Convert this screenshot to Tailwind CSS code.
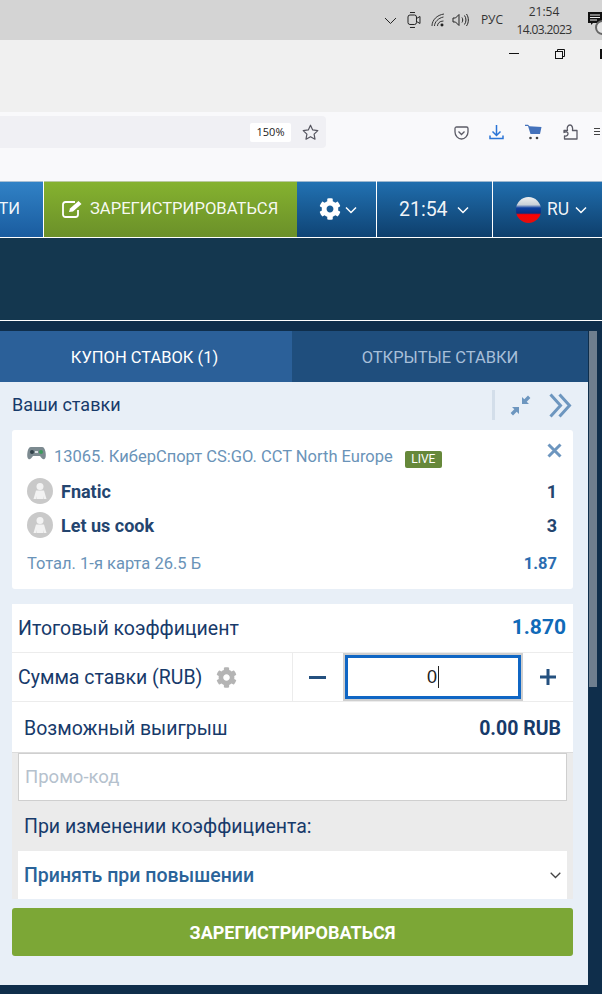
<!DOCTYPE html>
<html lang="ru">
<head>
<meta charset="utf-8">
<script src="https://cdn.jsdelivr.net/npm/@tailwindcss/browser@4"></script>
</head>
<body class="w-[602px] h-[994px] overflow-hidden bg-[#0f2e4b] font-['Roboto',sans-serif]">

<!-- Windows tray -->
<div class="h-[40px] bg-[#d4d4d4] flex items-center relative overflow-hidden text-[#2a2a2a]">
  <svg class="ml-[384px] w-[13px] h-[13px]" viewBox="0 0 13 13" fill="none" stroke="#222" stroke-width="1"><path d="M1 4l5.500 5.500L12 4"/></svg>
  <svg class="ml-[10px] w-[14px] h-[18px]" viewBox="0 0 14 18" fill="none" stroke="#222" stroke-width="1"><rect x="1" y="4" width="8.500" height="9.500" rx="2"/><path d="M9.500 7.500l3.500-2v7l-3.500-2M3 1.500h5M3 16.500h5"/></svg>
  <svg class="ml-[10px] w-[14px] h-[14px]" viewBox="0 0 14 14" fill="none" stroke="#333" stroke-width="1"><path d="M1 13C1 7 6 2 13 1M3.500 13c0-4 4-8 9-9M6.500 13c0-2.500 2-5 6-5"/><circle cx="11" cy="12" r="1.500" fill="#222" stroke="none"/></svg>
  <svg class="ml-[7px] w-[17px] h-[14px]" viewBox="0 0 17 14" fill="none" stroke="#222" stroke-width="1"><path d="M1 5h2.500L7 1.500v11L3.500 9H1zM10 4.500c1 1.500 1 3.500 0 5M12.500 2.500c2 2.500 2 6.500 0 9M14.500 1c2.500 3.500 2.500 8.500 0 12"/></svg>
  <span class="ml-[12px] text-[12px] font-['Open_Sans'] text-[#333] leading-none">РУС</span>
  <div class="ml-[13px] mt-[1px] w-[56px] text-center text-[12px] leading-[18px] font-['Open_Sans'] text-[#333] flex flex-col">
    <span>21:54</span><span class="tracking-[-0.6px] whitespace-nowrap">14.03.2023</span>
  </div>
  <svg class="ml-[16px] w-[14px] h-[14px] mb-[2px] shrink-0" viewBox="0 0 14 14" fill="#111"><path d="M0 0h14v11H5l-2 2v-2H0z"/><path d="M2 3h10M2 5.500h10M2 8h7" stroke="#eee" stroke-width="1"/></svg>
  <div class="absolute left-[595px] top-[20px] w-[15px] h-[15px] rounded-full bg-[#e4e4e4] border-2 border-[#666]"></div>
</div>

<!-- Window title bar -->
<div class="h-[72px] bg-[#f0f0f0] flex items-start">
  <div class="ml-[509px] mt-[13px] w-[10px] h-px bg-[#111]"></div>
  <svg class="ml-[36px] mt-[9px] w-[10px] h-[10px]" viewBox="0 0 10 10" fill="none" stroke="#111" stroke-width="1"><rect x="0.500" y="2.500" width="7" height="7"/><path d="M2.500 2.500v-2h7v7h-2"/></svg>
  <div class="ml-[35px] mt-[9px] w-[2px] h-[10px] bg-[#111]"></div>
</div>

<!-- Browser toolbar -->
<div class="h-[69px] bg-[#f9f9fb] flex items-start">
  <div class="mt-[4px] w-[326px] h-[32px] bg-[#f0f0f4] rounded-r-[4px] flex items-center justify-end shrink-0">
    <span class="w-[41px] h-[19px] bg-white rounded-[2px] text-[11px] font-['Open_Sans'] text-[#222] flex items-center justify-center">150%</span>
    <svg class="ml-[11px] mr-[7px] w-[17px] h-[17px]" viewBox="0 0 17 17" fill="none" stroke="#55555f" stroke-width="1.200" stroke-linejoin="round"><path d="M8.500 1.200l2.200 4.700 5.100.7-3.700 3.500.9 5.100-4.500-2.500-4.500 2.500.9-5.100L1.200 6.600l5.100-.7z"/></svg>
  </div>
  <svg class="ml-[128px] mt-[14px] w-[15px] h-[14px]" viewBox="0 0 15 14" fill="none" stroke="#5b5b66" stroke-width="1.300"><path d="M1 2.500C1 1.500 1.700 1 2.500 1h10c.8 0 1.500.5 1.500 1.500V6c0 3.500-3 7-6.500 7S1 9.500 1 6z"/><path d="M4.500 5.500l3 3 3-3"/></svg>
  <svg class="ml-[20px] mt-[12px] w-[15px] h-[16px]" viewBox="0 0 15 16" fill="none" stroke="#2a74d6" stroke-width="1.500"><path d="M7.500 1v10M3.500 7.500l4 4 4-4M1 11.500v3h13v-3"/></svg>
  <svg class="ml-[21px] mt-[12px] w-[17px] h-[16px]" viewBox="0 0 17 16"><path d="M0 0.800h3l1.500 1.500L16.500 3l-1.500 7H5.500L3 2H0z" fill="#4472bb"/><circle cx="5.500" cy="14" r="1.300" fill="#444"/><circle cx="12" cy="14" r="1.300" fill="#444"/></svg>
  <svg class="ml-[21px] mt-[12px] w-[15px] h-[16px]" viewBox="0 0 15 16" fill="none" stroke="#5b5b66" stroke-width="1.300" stroke-linejoin="round"><path d="M1 6.500h3.500C3.500 3.500 5 1 7 1s3 2.500 2.500 5.500H14v8.500H1.500v-3c2.500.5 3.500-1 3.500-2.500S3.500 7.500 1 8.500z"/></svg>
  <div class="ml-[16px] mt-[16px] w-[6px] flex flex-col gap-[2px]"><div class="h-px bg-[#444]"></div><div class="h-px bg-[#444]"></div><div class="h-px bg-[#444]"></div></div>
</div>

<!-- Site navigation -->
<div class="h-[57px] flex border-b border-white bg-white">
  <div class="w-[43px] bg-gradient-to-b from-[#3182c6] to-[#1a5c9f] flex items-center justify-end pr-[23px] border-t border-[#a9c0d4]">
    <span class="text-white/95 text-[16.500px]">ТИ</span>
  </div>
  <div class="ml-px w-[253px] bg-gradient-to-b from-[#85b22f] to-[#6b9029] flex items-center border-t border-[#b9c9a0]">
    <svg class="ml-[18px] mb-[2px] w-[21px] h-[18px]" viewBox="0 0 21 18" fill="none" stroke="#fff" stroke-width="1.800"><path d="M16 10v4.500c0 1.500-1 2.500-2.500 2.500h-10C2 17 1 16 1 14.500v-10C1 3 2 2 3.500 2H13"/><path d="M7 12l1-3.500L16.500 1l3 3-8.500 7.500z" fill="#fff" stroke="none"/></svg>
    <span class="ml-[7px] text-white/95 text-[16.600px] whitespace-nowrap">ЗАРЕГИСТРИРОВАТЬСЯ</span>
  </div>
  <div class="w-[79px] bg-gradient-to-b from-[#2272b3] to-[#0f4475] flex items-center border-t border-[#9db8d0]">
    <svg class="ml-[22px] mb-[2px] w-[22px] h-[22px]" viewBox="0 0 512 512" fill="#fff"><path d="M487.4 315.7l-42.6-24.6c4.3-23.2 4.3-47 0-70.2l42.6-24.6c4.9-2.8 7.100-8.600 5.500-14-11.100-35.600-30-67.800-54.700-94.600-3.800-4.100-10-5.100-14.800-2.300L380.800 110c-17.900-15.400-38.500-27.300-60.800-35.100V25.800c0-5.600-3.900-10.500-9.400-11.700-36.700-8.200-74.300-7.800-109.200 0-5.500 1.200-9.400 6.100-9.400 11.700V75c-22.200 7.900-42.800 19.800-60.800 35.100L88.700 85.500c-4.900-2.800-11-1.900-14.800 2.300-24.700 26.700-43.600 58.900-54.700 94.600-1.700 5.400.6 11.200 5.500 14L67.300 221c-4.300 23.200-4.300 47 0 70.200l-42.600 24.600c-4.900 2.800-7.100 8.600-5.500 14 11.100 35.600 30 67.800 54.700 94.600 3.800 4.100 10 5.100 14.800 2.300l42.600-24.600c17.900 15.400 38.500 27.300 60.800 35.100v49.200c0 5.600 3.900 10.500 9.400 11.700 36.700 8.200 74.300 7.800 109.200 0 5.500-1.200 9.400-6.100 9.400-11.700v-49.200c22.200-7.900 42.800-19.800 60.800-35.100l42.600 24.600c4.900 2.800 11 1.900 14.800-2.300 24.700-26.700 43.600-58.900 54.700-94.600 1.500-5.500-.7-11.300-5.600-14.100zM256 336c-44.100 0-80-35.900-80-80s35.900-80 80-80 80 35.900 80 80-35.900 80-80 80z"/></svg>
    <svg class="ml-[4px] w-[12px] h-[8px]" viewBox="0 0 12 8" fill="none" stroke="#fff" stroke-width="1.500"><path d="M1 1.500l5 5 5-5"/></svg>
  </div>
  <div class="ml-px w-[115px] bg-gradient-to-b from-[#206eae] to-[#0e3f6c] flex items-center border-t border-[#9db8d0]">
    <span class="ml-[22px] text-white/95 text-[19.500px]">21:54</span>
    <svg class="ml-[9px] w-[12px] h-[8px]" viewBox="0 0 12 8" fill="none" stroke="#fff" stroke-width="1.500"><path d="M1 1.500l5 5 5-5"/></svg>
  </div>
  <div class="ml-px flex-1 bg-gradient-to-b from-[#206eae] to-[#0e3f6c] flex items-center border-t border-[#9db8d0]">
    <div class="ml-[23px] w-[25px] h-[26px] rounded-full bg-[linear-gradient(180deg,#f0f0f0_0%,#c8d0d8_30%,#0d3fa0_42%,#0a2f80_62%,#f00_68%,#e01010_100%)]"></div>
    <span class="ml-[6px] text-white/95 text-[17.500px]">RU</span>
    <svg class="ml-[6px] w-[12px] h-[8px]" viewBox="0 0 12 8" fill="none" stroke="#fff" stroke-width="1.500"><path d="M1 1.500l5 5 5-5"/></svg>
  </div>
</div>

<!-- Dark band -->
<div class="h-[83px] bg-[#14374f] border-b border-white"></div>

<!-- Betslip with scrollbar -->
<div class="pt-[10px] flex items-start">
  <div class="w-[588px] h-[654px] bg-[#e8eff7] shrink-0">
    <div class="h-[51px] flex">
      <div class="w-[292px] pt-[3px] pr-[3px] bg-[#2b6099] flex items-center justify-center text-white text-[16.500px]">КУПОН СТАВОК (1)</div>
      <div class="flex-1 pt-[3px] bg-[#1f4e7d] flex items-center justify-center text-[#a7bfd9] text-[16.500px]">ОТКРЫТЫЕ СТАВКИ</div>
    </div>

    <div class="h-[48px] pl-[12px] pr-[16px] flex items-center">
      <span class="text-[#173a6a] text-[18px] flex-1 mb-[4px]">Ваши ставки</span>
      <div class="w-[3px] h-[30px] bg-[#d3deea] mb-[2px]"></div>
      <svg class="ml-[15px] w-[21px] h-[21px] mb-[2px]" viewBox="0 0 21 21" fill="#6d96bf"><path d="M12 9V2l2.300 2.300L18 .6 20.400 3l-3.700 3.700L19 9zM9 12v7l-2.300-2.300L3 20.400.6 18l3.700-3.700L2 12z"/></svg>
      <svg class="ml-[18px] w-[23px] h-[25px] mb-[2px]" viewBox="0 0 23 25" fill="none" stroke="#6d96bf" stroke-width="3"><path d="M1.500 1.500l10 11-10 11M10.500 1.500l10 11-10 11"/></svg>
    </div>

    <!-- Bet card -->
    <div class="ml-[12px] mr-[15px] h-[159px] bg-white rounded-[3px] pl-[15px] pr-[16px] pt-[14px] flex flex-col">
      <div class="h-[27px] flex items-center text-[#6a93b8] text-[16.500px] whitespace-nowrap">
        <svg class="w-[19px] h-[15px] mb-[9px] shrink-0" viewBox="0 0 19 15"><path d="M4 1h11c2 0 3 2 3.500 5s.5 6-1 7-3-1-4.500-3H6c-1.500 2-3 4-4.500 3S0 9 .5 6 2 1 4 1z" fill="#7c8a90"/><circle cx="5" cy="6" r="2" fill="#31424a"/><circle cx="14" cy="6" r="2" fill="#3b9a5c"/><path d="M8 5h3v2H8z" fill="#d8dfe2"/></svg>
        <span class="ml-[8px]">13065. КиберСпорт CS:GO. CCT North Europe</span>
        <span class="ml-[12px] w-[37px] h-[17px] mt-[3px] bg-[#66883a] rounded-[2px] text-white text-[12px] flex items-center justify-center">LIVE</span>
        <svg class="ml-auto mr-[-5px] mb-[15px] w-[15px] h-[15px]" viewBox="0 0 15 15" stroke="#6d96bf" stroke-width="3"><path d="M1.500 1.500l12 12M13.500 1.500l-12 12"/></svg>
      </div>
      <div class="h-[34px] mt-[3px] flex items-center text-[#24456f] text-[18px] font-bold">
        <div class="w-[26px] h-[26px] rounded-full bg-[#c9c9c9] flex items-center justify-center shrink-0"><svg class="w-[14px] h-[18px]" viewBox="0 0 14 18" fill="#f2f2f2"><circle cx="7" cy="4.500" r="3.500"/><path d="M3 8.500h8l2.500 8.500h-2.500l-.5-3v3H3.500v-3l-.5 3H.5z"/></svg></div>
        <span class="ml-[8px] flex-1">Fnatic</span><span>1</span>
      </div>
      <div class="h-[34px] flex items-center text-[#24456f] text-[18px] font-bold">
        <div class="w-[26px] h-[26px] rounded-full bg-[#c9c9c9] flex items-center justify-center shrink-0"><svg class="w-[14px] h-[18px]" viewBox="0 0 14 18" fill="#f2f2f2"><circle cx="7" cy="4.500" r="3.500"/><path d="M3 8.500h8l2.500 8.500h-2.500l-.5-3v3H3.500v-3l-.5 3H.5z"/></svg></div>
        <span class="ml-[8px] flex-1">Let us cook</span><span>3</span>
      </div>
      <div class="mt-[10px] h-[24px] flex items-center justify-between">
        <span class="text-[#6a93b8] text-[16.500px]">Тотал. 1-я карта 26.5 Б</span>
        <span class="text-[#2b6cb0] text-[16.500px] font-bold">1.87</span>
      </div>
    </div>

    <!-- Totals -->
    <div class="ml-[12px] mr-[15px] mt-[15px] bg-white">
      <div class="h-[49px] pl-[6px] pr-[7px] border-b border-[#ececec] flex items-center justify-between">
        <span class="text-[#173a6a] text-[19.500px] mt-[2px]">Итоговый коэффициент</span>
        <span class="text-[#106ab8] text-[21px] font-bold">1.870</span>
      </div>
      <div class="h-[49px] border-b border-[#ececec] flex items-center">
        <div class="w-[280px] shrink-0 pl-[6px] flex items-center">
          <span class="text-[#173a6a] text-[19.500px] whitespace-nowrap mt-[2px]">Сумма ставки (RUB)</span>
          <svg class="ml-[14px] w-[21px] h-[21px]" viewBox="0 0 512 512" fill="#b4b4b4"><path d="M487.4 315.7l-42.6-24.6c4.3-23.2 4.3-47 0-70.2l42.6-24.6c4.9-2.8 7.100-8.600 5.500-14-11.100-35.600-30-67.800-54.700-94.600-3.800-4.100-10-5.100-14.800-2.300L380.800 110c-17.900-15.400-38.500-27.300-60.800-35.100V25.800c0-5.600-3.900-10.500-9.400-11.700-36.700-8.200-74.300-7.800-109.200 0-5.500 1.200-9.400 6.100-9.400 11.700V75c-22.200 7.900-42.800 19.800-60.800 35.100L88.700 85.500c-4.900-2.800-11-1.900-14.800 2.300-24.700 26.700-43.600 58.900-54.700 94.600-1.700 5.400.6 11.200 5.500 14L67.300 221c-4.300 23.200-4.300 47 0 70.200l-42.600 24.600c-4.900 2.800-7.100 8.600-5.500 14 11.100 35.600 30 67.800 54.700 94.600 3.800 4.100 10 5.100 14.800 2.300l42.600-24.600c17.900 15.400 38.500 27.300 60.800 35.100v49.200c0 5.600 3.900 10.500 9.400 11.700 36.700 8.200 74.300 7.800 109.200 0 5.500-1.200 9.400-6.100 9.400-11.700v-49.200c22.200-7.900 42.800-19.800 60.800-35.100l42.600 24.600c4.900 2.800 11 1.900 14.800-2.300 24.700-26.700 43.600-58.900 54.700-94.600 1.500-5.500-.7-11.300-5.600-14.100zM256 336c-44.100 0-80-35.900-80-80s35.900-80 80-80 80 35.900 80 80-35.900 80-80 80z"/></svg>
        </div>
        <div class="h-full w-px bg-[#ececec] shrink-0"></div>
        <div class="ml-[16px] w-[17px] h-[3px] bg-[#24507f] shrink-0"></div>
        <div class="ml-[17px] w-[180px] h-[48px] border-[2px] border-[#cfcfcf] shrink-0">
          <div class="w-full h-full border-[3px] border-[#0f66c4] flex items-center justify-center text-[#222] text-[18px] font-['Liberation_Sans']"><span>0</span><span class="ml-px w-px h-[22px] bg-[#222]"></span></div>
        </div>
        <svg class="ml-[17px] w-[16px] h-[16px] shrink-0" viewBox="0 0 16 16" fill="#24507f"><path d="M6.500 0h3v6.500H16v3H9.500V16h-3V9.500H0v-3h6.500z"/></svg>
      </div>
      <div class="h-[51px] pl-[12px] pr-[12px] flex items-center justify-between border-b border-[#dcdcdc]">
        <span class="text-[#173a6a] text-[19.500px] mt-[3px]">Возможный выигрыш</span>
        <span class="text-[#173a6a] text-[19.500px] font-bold mt-[3px]">0.00 RUB</span>
      </div>
    </div>

    <!-- Promo + options -->
    <div class="ml-[12px] mr-[15px] h-[146px] bg-[#ebebeb] px-[6px]">
      <div class="h-[48px] bg-white border border-[#cfcfcf] flex items-center pl-[6px] text-[#b5c1cd] text-[18.500px]"><span class="mt-[2px]">Промо-код</span></div>
      <div class="h-[50px] flex items-center pl-[6px] text-[#173a6a] text-[19.500px]"><span class="mt-[2px]">При изменении коэффициента:</span></div>
      <div class="h-[48px] bg-white flex items-center pl-[6px] pr-[6px] justify-between">
        <span class="text-[#2a6399] text-[19.500px] font-medium mt-[2px]">Принять при повышении</span>
        <svg class="w-[11px] h-[7px]" viewBox="0 0 11 7" fill="none" stroke="#444" stroke-width="1.300"><path d="M.7.7l4.800 4.800L10.300.7"/></svg>
      </div>
    </div>

    <div class="ml-[12px] mr-[15px] mt-[9px] h-[48px] bg-[#7ca736] rounded-[3px] flex items-center justify-center text-white text-[18px] font-bold">ЗАРЕГИСТРИРОВАТЬСЯ</div>
  </div>

  <!-- Scrollbar thumb -->
  <div class="ml-px w-[8px] h-[356px] bg-[#6e7e8e]"></div>
</div>

</body>
</html>
